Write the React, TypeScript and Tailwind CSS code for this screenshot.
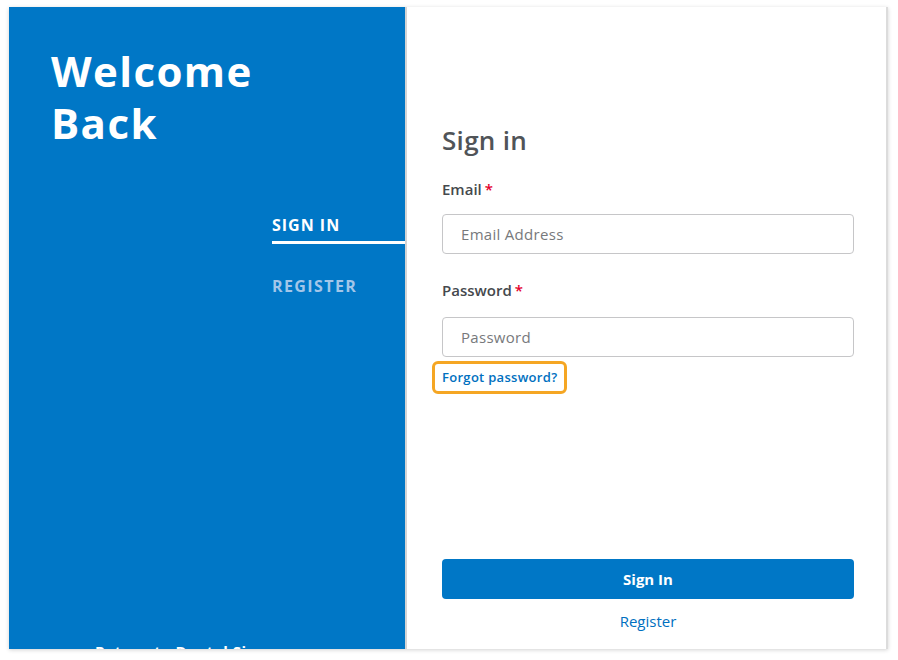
import React from "react";

export default function App() {
  const font = { fontFamily: '"Open Sans", "Liberation Sans", sans-serif' };
  return (
    <div className="w-[898px] h-[660px] bg-white pt-[7px] pl-[9px]" style={font}>
      <div className="w-[879px] h-[642px] flex overflow-hidden bg-white shadow-[0_1px_4px_rgba(0,0,0,0.18)]">
        {/* Left blue panel */}
        <div className="w-[398px] shrink-0 bg-[#0077c6] flex flex-col border-r-2 border-[#d4d4d4]">
          <h1 className="pl-[42px] pt-[38px] text-[42px] leading-[52px] font-bold text-white tracking-[1.4px]">
            Welcome
            <br />
            Back
          </h1>
          <div className="ml-[263px] mt-[66px] flex flex-col">
            <div className="text-[16px] leading-[20px] font-bold text-white tracking-[1px] pb-[6px] border-b-[3px] border-white">
              SIGN IN
            </div>
            <div className="mt-[32px] text-[16px] leading-[20px] font-bold text-[#a3c6e9] tracking-[1.4px]">
              REGISTER
            </div>
          </div>
          <div className="mt-auto mb-[-12px] pl-[86px] text-[15px] leading-[20px] font-bold text-white tracking-[0.5px]">
            Return to Dental Signs.com
          </div>
        </div>
        {/* Right form panel */}
        <div className="flex-1 flex flex-col pl-[35px] pr-[32px] pt-[117px] pb-[18px] border-r-2 border-[#dcdcdc]">
          <h2 className="text-[26px] leading-[32px] font-semibold text-[#505458] tracking-[0.3px]">Sign in</h2>
          <label className="mt-[23px] text-[15px] leading-[20px] font-semibold text-[#45494d]">
            Email<span className="text-[#e4002b] ml-[3px]">*</span>
          </label>
          <div className="mt-[15px] h-[40px] rounded-[4px] border border-[#c6c6c8] flex items-center pl-[18px] text-[15px] text-[#77797c] tracking-[0.3px]">
            Email Address
          </div>
          <label className="mt-[26px] text-[15px] leading-[20px] font-semibold text-[#45494d]">
            Password<span className="text-[#e4002b] ml-[3px]">*</span>
          </label>
          <div className="mt-[17px] h-[40px] rounded-[4px] border border-[#c6c6c8] flex items-center pl-[18px] text-[15px] text-[#77797c] tracking-[0.3px]">
            Password
          </div>
          <div className="mt-[4px] ml-[-10px] self-start rounded-[6px] border-[3px] border-[#f5a623] px-[7px] py-[4px] text-[13px] leading-[19px] font-semibold text-[#0070c0] tracking-[0.3px]">
            Forgot password?
          </div>
          <button className="mt-auto h-[40px] rounded-[4px] bg-[#0077c6] text-white text-[15px] font-bold">
            Sign In
          </button>
          <div className="mt-[12px] text-center text-[15px] leading-[20px] text-[#0070c0]">Register</div>
        </div>
      </div>
    </div>
  );
}
